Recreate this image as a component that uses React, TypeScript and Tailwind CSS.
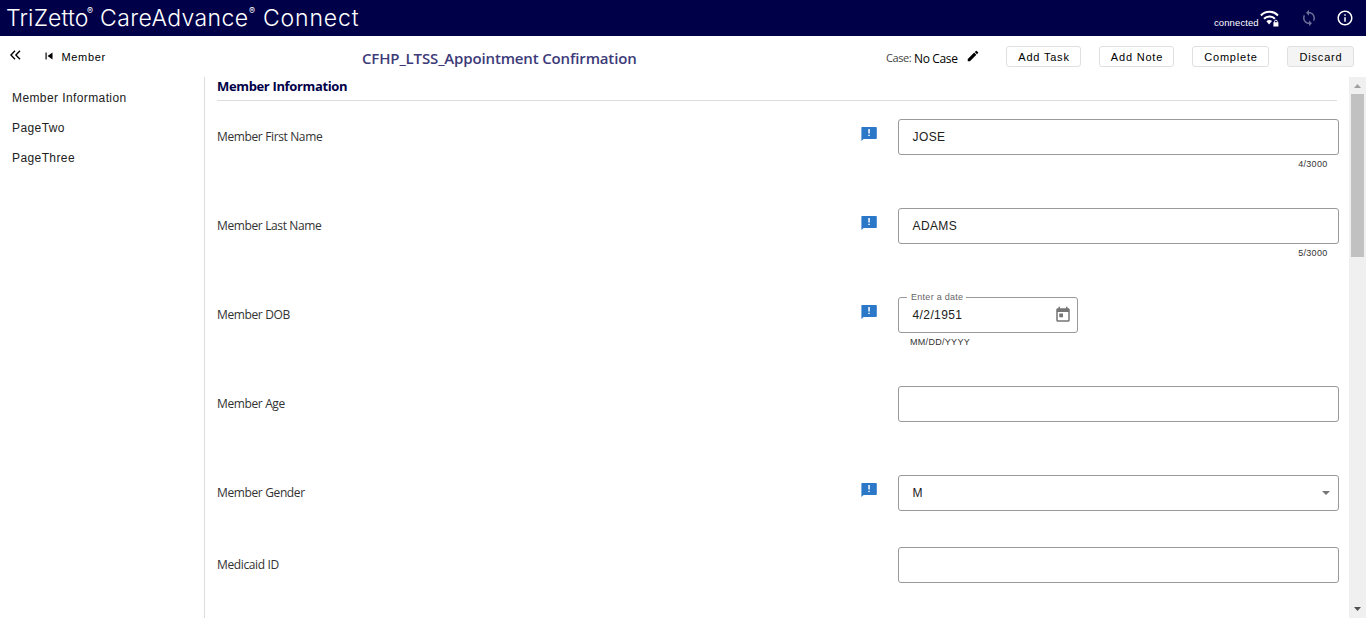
import type { ReactNode } from 'react';
import { MdSync, MdInfoOutline, MdEdit, MdToday, MdSkipPrevious } from 'react-icons/md';

const segoe = "font-['Open_Sans','Noto_Sans',sans-serif]";
const arial = "font-['Liberation_Sans',Arial,sans-serif]";

function SecureWifiIcon() {
  return (
    <svg className="h-[17px] w-[19px] shrink-0" viewBox="0 0 19 17" fill="none" stroke="#fff" strokeWidth="2.1">
      <path d="M.9 5.4C5.6.6 13.2.6 18 5.4" />
      <path d="M4 8.8c3-3 7.9-3 10.9 0" />
      <path d="M6.4 11.3a4.4 4.4 0 0 1 5.6-.3l-2.9 3.6z" fill="#fff" stroke="none" />
      <path d="M13.4 12.2h5v4.3h-5z" fill="#fff" stroke="none" />
      <path d="M14.5 12.6v-1a1.4 1.4 0 0 1 2.8 0v1" strokeWidth="1" />
    </svg>
  );
}

function FlagIcon() {
  return (
    <svg className="h-[14px] w-4" viewBox="0 0 16 14">
      <path d="M1 0h14a.8.8 0 0 1 .8.8v10.4a.8.8 0 0 1-.8.8H2.6L.4 14V.8A.8.8 0 0 1 1 0z" fill="#2b78c9" />
      <path d="M7.3 2h1.5v4.4H7.3zM7.3 7.7h1.5v1.4H7.3z" fill="#fff" />
    </svg>
  );
}

function ActionButton({ label, className }: { label: string; className: string }) {
  return (
    <button
      className={`${arial} ${className} flex h-[21px] shrink-0 items-center justify-center whitespace-nowrap rounded-[3px] border border-[#e0e0e0] pl-px pt-px text-[11px] tracking-[0.8px] text-black`}
    >
      {label}
    </button>
  );
}

function Row({ label, flagged, tall = true, children }: { label: string; flagged?: boolean; tall?: boolean; children: ReactNode }) {
  return (
    <div className={`flex shrink-0 ${tall ? 'h-[89px]' : 'h-[72px]'}`}>
      <div className={`${segoe} w-[644px] pt-[9px] text-[12px] leading-[18px] tracking-[-0.37px] text-[#333]`}>{label}</div>
      <div className="w-[37px] pt-[8px]">{flagged && <FlagIcon />}</div>
      <div>{children}</div>
    </div>
  );
}

function Box({ value, children }: { value?: string; children?: ReactNode }) {
  return (
    <div className={`${arial} flex h-9 w-[441px] items-center justify-between rounded-[3px] border border-[#999] pl-[13.5px] pr-[8px] text-[12px] tracking-[0.4px] text-[#212121]`}>
      <span>{value}</span>
      {children}
    </div>
  );
}

function Counter({ text }: { text: string }) {
  return <div className={`${arial} w-[429.5px] pt-[3px] text-right text-[9px] leading-[12px] tracking-[0.3px] text-[#333]`}>{text}</div>;
}

export default function App() {
  return (
    <div className="flex h-[618px] w-[1366px] flex-col overflow-hidden bg-white">
      <header className="flex h-9 shrink-0 items-center bg-[#000048] text-white">
        <h1 className="flex w-[1214px] whitespace-nowrap pl-[6px] pb-px text-[23px] font-light leading-8 font-['Inter',sans-serif]">
          <span className="w-[81px] tracking-[0.15px]">TriZetto</span>
          <span className="w-[13px] pt-[3px] text-[9px] font-normal leading-3">®</span>
          <span className="w-[149px] tracking-[0.4px]">CareAdvance</span>
          <span className="w-[14px] pt-[3px] text-[9px] font-normal leading-3">®</span>
          <span className="tracking-[0.85px]">Connect</span>
        </h1>
        <span className={`${arial} w-[46px] pt-[9px] text-[9.5px] leading-3 tracking-[0.1px]`}>connected</span>
        <SecureWifiIcon />
        <MdSync className="ml-[21px] h-[18px] w-[18px] text-[#6b6b98]" />
        <MdInfoOutline className="ml-[18px] h-[18px] w-[18px]" />
      </header>

      <div className="flex h-[41px] shrink-0 items-center">
        <svg className="ml-[10px] h-[10px] w-[11px] -translate-y-[2px]" viewBox="0 0 11 10" fill="none" stroke="#000" strokeWidth="1.4">
          <path d="M5 .8.9 5 5 9.2M10 .8 5.9 5 10 9.2" />
        </svg>
        <MdSkipPrevious className="ml-[21px] h-[14px] w-[14px] -translate-y-px" />
        <span className={`${arial} ml-[5.5px] w-[300.5px] text-[11px] leading-4 tracking-[0.65px] text-black`}>Member</span>
        <h2 className={`${segoe} w-[524px] whitespace-nowrap pt-[2px] text-[15px] font-semibold leading-5 tracking-[-0.15px] text-[#3c3a78]`}>CFHP_LTSS_Appointment Confirmation</h2>
        <span className={`${segoe} w-[28px] whitespace-nowrap pt-[3px] text-[11px] leading-4 tracking-[-0.45px] text-[#444]`}>Case:</span>
        <span className={`${segoe} w-[52px] whitespace-nowrap pt-[4px] text-[12px] leading-4 tracking-[-0.35px] text-black`}>No Case</span>
        <MdEdit className="h-[14px] w-[14px] -translate-y-px text-black" />
        <div className="ml-[26px] flex gap-[18px]">
          <ActionButton label="Add Task" className="w-[75px] bg-white" />
          <ActionButton label="Add Note" className="w-[75px] bg-white" />
          <ActionButton label="Complete" className="w-[77px] bg-white" />
          <ActionButton label="Discard" className="w-[67px] bg-[#f4f4f4]" />
        </div>
      </div>

      <div className="flex min-h-0 flex-1">
        <nav className={`${arial} flex w-[204px] shrink-0 flex-col pl-3 pt-[6px] text-[12px] leading-[30px] tracking-[0.4px] text-[#212121]`}>
          <a>Member Information</a>
          <a>PageTwo</a>
          <a>PageThree</a>
        </nav>
        <main className="flex w-[1145px] shrink-0 flex-col overflow-hidden border-l border-[#ddd] pl-3">
          <h3 className={`${segoe} mb-[18px] h-6 w-[1120px] shrink-0 border-b border-[#ddd] text-[13px] font-bold leading-[19px] tracking-[-0.35px] text-[#000048]`}>Member Information</h3>
          <Row label="Member First Name" flagged>
            <Box value="JOSE" />
            <Counter text="4/3000" />
          </Row>
          <Row label="Member Last Name" flagged>
            <Box value="ADAMS" />
            <Counter text="5/3000" />
          </Row>
          <Row label="Member DOB" flagged>
            <div className={`${arial} relative flex h-9 w-[180px] items-center justify-between rounded-[3px] border border-[#999] pl-[13.5px] pr-[5px] text-[12px] tracking-[0.4px] text-[#212121]`}>
              <span className="absolute -top-[7px] left-[8px] whitespace-nowrap bg-white pl-1 pr-[3px] text-[9px] leading-3 tracking-[0.28px] text-[#666]">Enter a date</span>
              <span>4/2/1951</span>
              <MdToday className="h-[18px] w-[18px] text-[#757575]" />
            </div>
            <div className={`${arial} pl-3 pt-[3px] text-[9px] leading-3 tracking-[0.3px] text-[#333]`}>MM/DD/YYYY</div>
          </Row>
          <Row label="Member Age">
            <Box />
          </Row>
          <Row label="Member Gender" flagged tall={false}>
            <Box value="M">
              <svg className="h-1 w-2" viewBox="0 0 8 4" fill="#757575">
                <path d="M0 0h8L4 4z" />
              </svg>
            </Box>
          </Row>
          <Row label="Medicaid ID" tall={false}>
            <Box />
          </Row>
        </main>
        <div className="flex w-[17px] shrink-0 flex-col items-center bg-[#f0f0f0]">
          <svg className="mt-[7px] h-1 w-[7px] shrink-0" viewBox="0 0 7 4" fill="#a0a0a0">
            <path d="M0 4h7L3.5 0z" />
          </svg>
          <div className="mt-[6px] h-[163px] w-[13px] shrink-0 bg-[#c1c1c1]" />
          <svg className="mb-[7px] mt-auto h-1 w-[7px] shrink-0" viewBox="0 0 7 4" fill="#505050">
            <path d="M0 0h7L3.5 4z" />
          </svg>
        </div>
      </div>
    </div>
  );
}
